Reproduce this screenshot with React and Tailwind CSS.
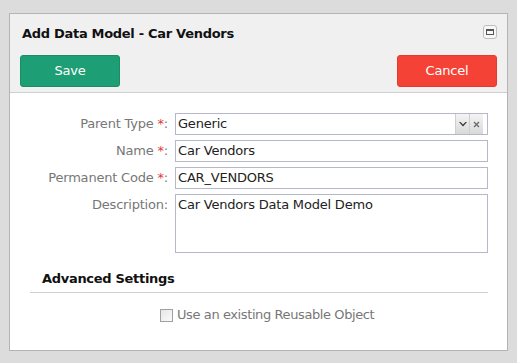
import React from 'react';

const font = { fontFamily: '"DejaVu Sans", Verdana, sans-serif' };

const Field = ({ label, required, children, top = false }) => (
  <div className={`flex ${top ? 'items-start' : 'items-center'}`}>
    <label className="w-[158px] text-right text-[13px] text-[#777] leading-[22px]">
      {label}
      {required && <span className="text-[#e53935]"> *</span>}:
    </label>
    <div className="ml-[7px] w-[313px]">{children}</div>
  </div>
);

const App = () => {
  return (
    <div className="w-[517px] h-[363px] bg-[#dcdcdc] pt-[13px] pl-[9px] tracking-[-0.2px]" style={font}>
      <div className="w-[499px] h-[338px] border border-[#b4b4b4] bg-white flex flex-col">
        {/* Header */}
        <div className="bg-[#f0f0f0] border-b border-[#cfcfcf] h-[79px] px-[10px] relative">
          <h1 className="pt-[11px] pl-[2px] text-[13px] font-bold text-[#111] leading-[18px] tracking-[-0.3px]">
            Add Data Model - Car Vendors
          </h1>
          <button className="absolute right-[10px] top-[11px] w-[14px] h-[14px] rounded-[3px] border border-[#bdbdbd] bg-[#f7f7f7] flex items-center justify-center">
            <span className="block w-[8px] h-[6px] border border-[#555] border-t-[2px]" />
          </button>
          <div className="flex justify-between mt-[12px]">
            <button className="w-[100px] h-[32px] rounded-[3px] bg-[#1e9e74] border border-[#1a8c66] text-white text-[13px]">
              Save
            </button>
            <button className="w-[100px] h-[32px] rounded-[3px] bg-[#f44336] border border-[#e53a2e] text-white text-[13px]">
              Cancel
            </button>
          </div>
        </div>

        {/* Form */}
        <div className="pt-[20px] flex flex-col gap-[5px]">
          <Field label="Parent Type" required>
            <div className="h-[22px] border border-[#b5b8c8] flex items-center pl-[2px] text-[13px] text-[#222]">
              <span className="flex-1">Generic</span>
              <span className="w-[14px] h-[20px] bg-gradient-to-b from-[#f4f4f4] to-[#d9d9d9] border-l border-[#cfcfcf] flex items-center justify-center">
                <svg width="8" height="5" viewBox="0 0 8 5"><path d="M0 0 L4 4.5 L8 0 L6.5 0 L4 2.5 L1.5 0 Z" fill="#333" /></svg>
              </span>
              <span className="w-[14px] h-[20px] bg-gradient-to-b from-[#f4f4f4] to-[#d9d9d9] border-l border-[#cfcfcf] flex items-center justify-center mr-[4px]">
                <svg width="7" height="7" viewBox="0 0 7 7"><path d="M1 1 L6 6 M6 1 L1 6" stroke="#666" strokeWidth="1.2" /></svg>
              </span>
            </div>
          </Field>
          <Field label="Name" required>
            <div className="h-[22px] border border-[#b5b8c8] pl-[2px] text-[13px] leading-[20px] text-[#222]">Car Vendors</div>
          </Field>
          <Field label="Permanent Code" required>
            <div className="h-[22px] border border-[#b5b8c8] pl-[2px] text-[13px] leading-[20px] text-[#222]">CAR_VENDORS</div>
          </Field>
          <Field label="Description" top>
            <div className="h-[59px] border border-[#b5b8c8] pl-[2px] pt-[1px] text-[13px] leading-[18px] text-[#222]">
              Car Vendors Data Model Demo
            </div>
          </Field>
        </div>

        <div className="mt-[17px] pl-[32px] text-[13px] font-bold text-[#111] leading-[18px] tracking-[-0.3px]">Advanced Settings</div>
        <div className="ml-[20px] w-[458px] mt-[4px] border-t border-[#cfcfcf]" />
        <div className="mt-[14px] pl-[150px] flex items-center gap-[4px]">
          <span className="w-[13px] h-[13px] border border-[#a0a0a0] bg-gradient-to-br from-[#e6e6e6] to-[#fafafa]" />
          <span className="text-[13px] text-[#777] leading-[16px] tracking-[-0.4px]">Use an existing Reusable Object</span>
        </div>
      </div>
    </div>
  );
};

export default App;
